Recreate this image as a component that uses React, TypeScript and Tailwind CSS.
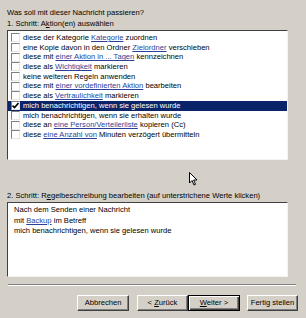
type Part = string | { link: string };

const actions: Part[][] = [
  ['diese der Kategorie ', { link: 'Kategorie' }, ' zuordnen'],
  ['eine Kopie davon in den Ordner ', { link: 'Zielordner' }, ' verschieben'],
  ['diese mit ', { link: 'einer Aktion in ... Tagen' }, ' kennzeichnen'],
  ['diese als ', { link: 'Wichtigkeit' }, ' markieren'],
  ['keine weiteren Regeln anwenden'],
  ['diese mit ', { link: 'einer vordefinierten Aktion' }, ' bearbeiten'],
  ['diese als ', { link: 'Vertraulichkeit' }, ' markieren'],
  ['mich benachrichtigen, wenn sie gelesen wurde'],
  ['mich benachrichtigen, wenn sie erhalten wurde'],
  ['diese an ', { link: 'eine Person/Verteilerliste' }, ' kopieren (Cc)'],
  ['diese ', { link: 'eine Anzahl von' }, ' Minuten verzögert übermitteln'],
];

const checkedRow = 7;

function Text({ parts, selected }: { parts: Part[]; selected?: boolean }) {
  return (
    <span className="whitespace-pre">
      {parts.map((p, i) =>
        typeof p === 'string' ? (
          <span key={i}>{p}</span>
        ) : (
          <span key={i} className={selected ? 'underline' : 'underline text-[#2a3f9a]'}>
            {p.link}
          </span>
        )
      )}
    </span>
  );
}

function Checkbox({ checked }: { checked?: boolean }) {
  return (
    <span className="w-[9px] h-[9px] shrink-0 bg-white border border-t-[#808080] border-l-[#808080] border-r-[#e8e6e0] border-b-[#e8e6e0] flex items-center justify-center">
      {checked && (
        <svg width="7" height="7" viewBox="0 0 7 7">
          <path d="M0.5 3.5 L2.5 5.5 L6.5 1" stroke="#000" strokeWidth="1.6" fill="none" />
        </svg>
      )}
    </span>
  );
}

function Button({ label, def }: { label: React.ReactNode; def?: boolean }) {
  return (
    <div
      className={
        'h-[16px] flex items-center justify-center bg-[#d4d0c8] ' +
        (def
          ? 'border border-black shadow-[inset_1px_1px_0_#fff,inset_-1px_-1px_0_#404040,inset_-2px_-2px_0_#808080]'
          : 'border border-t-white border-l-white border-r-[#404040] border-b-[#404040] shadow-[inset_-1px_-1px_0_#808080]')
      }
    >
      {label}
    </div>
  );
}

export default function App() {
  return (
    <div
      className="relative w-[306px] h-[318px] bg-[#d4d0c8] text-[7.6px] text-black leading-none overflow-hidden"
      style={{ fontFamily: '"Liberation Sans", Arial, sans-serif' }}
    >
      <div className="flex flex-col pl-[7px] pt-[9px]">
        <div className="h-[8px]">Was soll mit dieser Nachricht passieren?</div>
        <div className="mt-[3px] h-[8px]">
          1. Schritt: A<span className="underline">k</span>tion(en) auswählen
        </div>
        <div className="mt-[2px] w-[281px] h-[130px] bg-white border border-t-[#404040] border-l-[#404040] border-r-[#f4f3f0] border-b-[#f4f3f0] pt-[2px] flex flex-col">
          {actions.map((parts, i) => {
            const sel = i === checkedRow;
            return (
              <div
                key={i}
                className={
                  'h-[9.7px] flex items-center gap-[3px] pl-[3px] ' +
                  (sel ? 'bg-[#0a246a] text-white' : '')
                }
              >
                <Checkbox checked={sel} />
                <Text parts={parts} selected={sel} />
              </div>
            );
          })}
        </div>
        <div className="mt-[32px] h-[8px]">
          2. Schritt: R<span className="underline">e</span>gelbeschreibung bearbeiten (auf unterstrichene Werte klicken)
        </div>
        <div className="mt-[2px] w-[281px] h-[75px] bg-white border border-t-[#404040] border-l-[#404040] border-r-[#f4f3f0] border-b-[#f4f3f0] pl-[6px] pt-[3px] flex flex-col gap-[2.5px]">
          <div className="h-[8px]">Nach dem Senden einer Nachricht</div>
          <div className="h-[8px]">
            mit <span className="underline text-[#2a3f9a]">Backup</span> im Betreff
          </div>
          <div className="h-[8px]">mich benachrichtigen, wenn sie gelesen wurde</div>
        </div>
        <div className="mt-[7px] ml-[1px] w-[288px] h-[2px] border-t border-t-[#808080] border-b border-b-white" />
        <div className="mt-[9px] flex">
          <div className="ml-[70px] w-[52px]">
            <Button label="Abbrechen" />
          </div>
          <div className="ml-[8px] w-[51px]">
            <Button
              label={
                <span>
                  &lt; <span className="underline">Z</span>urück
                </span>
              }
            />
          </div>
          <div className="w-[52px]">
            <Button
              def
              label={
                <span>
                  <span className="underline">W</span>eiter &gt;
                </span>
              }
            />
          </div>
          <div className="ml-[7px] w-[51px]">
            <Button label="Fertig stellen" />
          </div>
        </div>
      </div>
      <svg className="absolute left-[189px] top-[172px]" width="9" height="15" viewBox="0 0 9 15">
        <path d="M0.5 0.5 L0.5 11 L3 8.5 L5 13 L6.5 12.3 L4.6 8 L8 8 Z" fill="#fff" stroke="#000" strokeWidth="1" />
      </svg>
    </div>
  );
}
